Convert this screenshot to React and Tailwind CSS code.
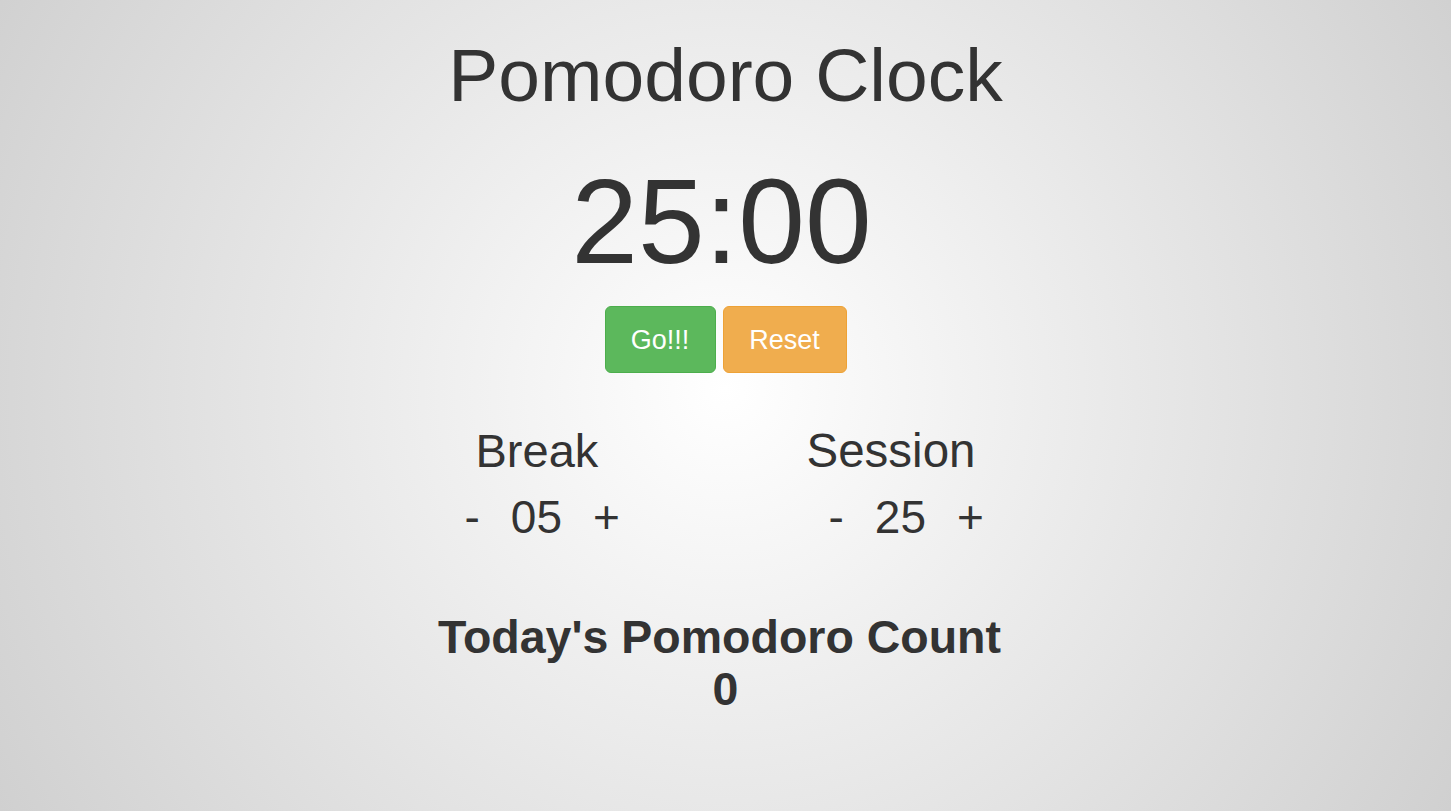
import React, { useState } from "react";

export default function App() {
  const [breakLen, setBreakLen] = useState(5);
  const [sessionLen, setSessionLen] = useState(25);
  const pad = (n) => String(n).padStart(2, "0");

  return (
    <div
      className="min-h-screen w-full text-[#333333] bg-[radial-gradient(circle_at_50%_48%,#ffffff_0%,#d0d0d0_100%)]"
      style={{ fontFamily: '"Liberation Sans", Arial, Helvetica, sans-serif' }}
    >
      <div className="flex flex-col items-center pt-[38px]">
        <h1 className="text-[75px] leading-[75px] font-normal">Pomodoro Clock</h1>

        <div className="mt-[48px] mr-[8px] text-[120px] leading-[120px]">{pad(sessionLen)}:00</div>

        {/* controls */}
        <div className="mt-[25px] flex gap-[7px]">
          <button className="h-[67px] w-[111px] rounded-[6px] border border-[#4cae4c] bg-[#5cb85c] pt-[2px] text-[27px] text-white">
            Go!!!
          </button>
          <button className="h-[67px] w-[124px] rounded-[6px] border border-[#eea236] bg-[#f0ad4e] pt-[2px] text-[27px] text-white">
            Reset
          </button>
        </div>

        {/* lengths */}
        <div className="mt-[55px] flex w-[522px] text-[46px] leading-[46px]">
          <div className="flex w-[342px] flex-col items-start">
            <div className="ml-[11px] text-[47px]">Break</div>
            <div className="mt-[20px] flex gap-[31px]">
              <span onClick={() => setBreakLen(Math.max(1, breakLen - 1))}>-</span>
              <span>{pad(breakLen)}</span>
              <span onClick={() => setBreakLen(breakLen + 1)}>+</span>
            </div>
          </div>
          <div className="flex flex-col items-start">
            <div className="text-[47.5px]">Session</div>
            <div className="ml-[22px] mt-[20px] flex gap-[31px]">
              <span onClick={() => setSessionLen(Math.max(1, sessionLen - 1))}>-</span>
              <span>{pad(sessionLen)}</span>
              <span onClick={() => setSessionLen(sessionLen + 1)}>+</span>
            </div>
          </div>
        </div>

        <div className="mt-[71px] flex flex-col items-center text-[46.5px] leading-[52px] font-bold">
          <div className="mr-[12px]">Today's Pomodoro Count</div>
          <div>0</div>
        </div>
      </div>
    </div>
  );
}
